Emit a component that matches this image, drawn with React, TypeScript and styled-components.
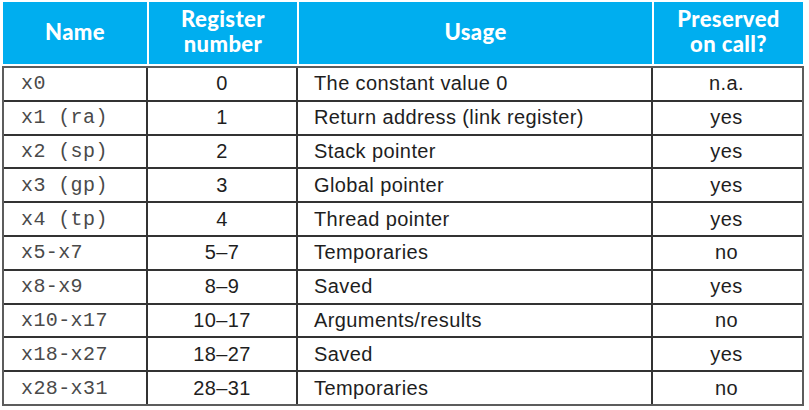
import React from 'react';
import styled, { createGlobalStyle } from 'styled-components';

const GlobalStyle = createGlobalStyle`
  body {
    margin: 0;
    background: #ffffff;
  }
`;

type Row = {
  name: string;
  number: string;
  usage: string;
  preserved: string;
};

const rows: Row[] = [
  { name: 'x0', number: '0', usage: 'The constant value 0', preserved: 'n.a.' },
  { name: 'x1 (ra)', number: '1', usage: 'Return address (link register)', preserved: 'yes' },
  { name: 'x2 (sp)', number: '2', usage: 'Stack pointer', preserved: 'yes' },
  { name: 'x3 (gp)', number: '3', usage: 'Global pointer', preserved: 'yes' },
  { name: 'x4 (tp)', number: '4', usage: 'Thread pointer', preserved: 'yes' },
  { name: 'x5-x7', number: '5–7', usage: 'Temporaries', preserved: 'no' },
  { name: 'x8-x9', number: '8–9', usage: 'Saved', preserved: 'yes' },
  { name: 'x10-x17', number: '10–17', usage: 'Arguments/results', preserved: 'no' },
  { name: 'x18-x27', number: '18–27', usage: 'Saved', preserved: 'yes' },
  { name: 'x28-x31', number: '28–31', usage: 'Temporaries', preserved: 'no' },
];

export default function App() {
  return (
    <>
      <GlobalStyle />
      <Wrapper>
        <HeaderRow>
          <HeadCell>Name</HeadCell>
          <HeadCell>
            Register
            <br />
            number
          </HeadCell>
          <HeadCell>Usage</HeadCell>
          <HeadCell $last>
            Preserved
            <br />
            on call?
          </HeadCell>
        </HeaderRow>
        <Body>
          {rows.map((r, i) => (
            <BodyRow key={r.name} $last={i === rows.length - 1}>
              <NameCell>{r.name}</NameCell>
              <Cell $align="center">{r.number}</Cell>
              <Cell $align="left">{r.usage}</Cell>
              <Cell $align="center" $last>
                {r.preserved}
              </Cell>
            </BodyRow>
          ))}
        </Body>
      </Wrapper>
    </>
  );
}

const Wrapper = styled.div`
  padding: 2px 0 0 2px;
  width: 802px;
  display: flex;
  flex-direction: column;
  gap: 2px;
`;

const HeaderRow = styled.div`
  display: grid;
  grid-template-columns: 146px 150px 355px 149px;
  height: 62px;
  padding-left: 1px;
`;

const HeadCell = styled.div<{ $last?: boolean }>`
  background: #00aeef;
  color: #ffffff;
  font-family: Lato, 'Liberation Sans', sans-serif;
  font-weight: 900;
  font-size: 22px;
  line-height: 25px;
  letter-spacing: 0.4px;
  display: flex;
  align-items: center;
  justify-content: center;
  text-align: center;
  padding-bottom: 4px;
  margin-right: ${(p) => (p.$last ? '0' : '2px')};
`;

const Body = styled.div`
  border: 2px solid #5c5c5c;
`;

const BodyRow = styled.div<{ $last?: boolean }>`
  display: grid;
  grid-template-columns: 144px 150px 355px 147px;
  height: 31.8px;
  border-bottom: ${(p) => (p.$last ? 'none' : '2px solid #333333')};
`;

const Cell = styled.div<{ $align: 'left' | 'center'; $last?: boolean }>`
  display: flex;
  align-items: center;
  justify-content: ${(p) => (p.$align === 'center' ? 'center' : 'flex-start')};
  padding-left: ${(p) => (p.$align === 'center' ? '0' : '16px')};
  border-right: ${(p) => (p.$last ? 'none' : '2px solid #333333')};
  font-family: 'Liberation Sans', Arial, sans-serif;
  font-size: 20px;
  letter-spacing: 0.4px;
  color: #1e1e1e;
  white-space: nowrap;
`;

const NameCell = styled.div`
  display: flex;
  align-items: center;
  padding-left: 17px;
  border-right: 2px solid #333333;
  font-family: 'Liberation Mono', 'DejaVu Sans Mono', monospace;
  font-size: 20px;
  letter-spacing: 0.4px;
  color: #4a4a4a;
  white-space: pre;
`;
